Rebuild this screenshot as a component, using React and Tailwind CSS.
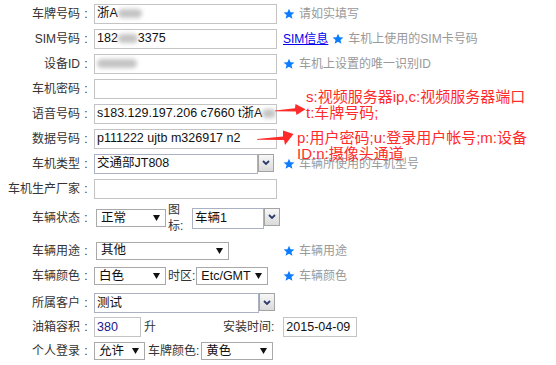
import React from 'react';

const Colon = () => <span className="inline-block w-[12px] text-center">:</span>;

const Label = ({ text, colon = true }) => (
  <div className="w-[92px] shrink-0 text-right text-[12px] text-[#333] whitespace-nowrap">
    {text}
    {colon && <Colon />}
  </div>
);

const Blur = ({ w }) => (
  <span className={`inline-block ${w} h-[9px] bg-[#c4c4c4] blur-[2px] rounded-full`} />
);

const TextBox = ({ w, children }) => (
  <div
    className={`${w} h-[20px] shrink-0 border border-[#c4c4c4] bg-white flex items-center pl-[2px] text-[12.5px] text-[#111] whitespace-nowrap overflow-hidden`}
  >
    {children}
  </div>
);

const Tri = () => (
  <svg width="7" height="6" viewBox="0 0 7 6">
    <path d="M0 0H7L3.5 6Z" fill="#111" />
  </svg>
);

const Select = ({ w, children }) => (
  <div
    className={`${w} h-[18px] shrink-0 border border-[#a9a9a9] bg-white flex items-center justify-between pl-[4px] pr-[5px] text-[12.5px] text-[#111]`}
  >
    <span>{children}</span>
    <Tri />
  </div>
);

const Combo = ({ w, h = 'h-[20px]', children }) => (
  <div className="flex items-start shrink-0">
    <div
      className={`${w} ${h} border border-[#a9b1c3] bg-white flex items-center pl-[2px] text-[12.5px] text-[#111] whitespace-nowrap`}
    >
      {children}
    </div>
    <div className="w-[16px] h-[18px] border border-[#a4a4a4] bg-linear-to-b from-[#f7f7f7] to-[#dadada] flex items-center justify-center">
      <svg width="8" height="5" viewBox="0 0 8 5">
        <path d="M1 1L4 4L7 1" stroke="#2c3b6b" strokeWidth="1.8" fill="none" />
      </svg>
    </div>
  </div>
);

const Star = () => (
  <svg width="12" height="12" viewBox="0 0 24 24" className="shrink-0">
    <path
      d="M12 1.5l3.1 7.1 7.7.6-5.9 5 1.9 7.5L12 17.6l-6.8 4.1 1.9-7.5-5.9-5 7.7-.6z"
      fill="#0a7cff"
    />
  </svg>
);

const Hint = ({ children }) => (
  <div className="ml-[2px] flex items-center gap-[4px] text-[12px] text-[#999] whitespace-nowrap">
    <Star />
    <span>{children}</span>
  </div>
);

const Cell = ({ children }) => (
  <div className="w-[189px] shrink-0 pl-[2px] flex items-center">{children}</div>
);

export default function App() {
  return (
    <div className="relative w-[556px] h-[365px] overflow-hidden bg-white pt-[1px] font-['Liberation_Sans','Noto_Sans_CJK_SC',sans-serif]">
      {/* 基本信息 */}
      <div className="flex items-center h-[25px]">
        <Label text="车牌号码" />
        <Cell>
          <TextBox w="w-[183px]">
            浙A
            <Blur w="w-[24px]" />
          </TextBox>
        </Cell>
        <Hint>请如实填写</Hint>
      </div>

      <div className="flex items-center h-[25px]">
        <Label text="SIM号码" />
        <Cell>
          <TextBox w="w-[183px]">
            182
            <Blur w="w-[20px]" />
            3375
          </TextBox>
        </Cell>
        <a className="ml-[2px] text-[12px] text-[#0000ee] underline whitespace-nowrap">SIM信息</a>
        <div className="ml-[2px]">
          <Hint>车机上使用的SIM卡号码</Hint>
        </div>
      </div>

      <div className="flex items-center h-[25px]">
        <Label text="设备ID" />
        <Cell>
          <TextBox w="w-[183px]">
            <Blur w="w-[40px]" />
          </TextBox>
        </Cell>
        <Hint>车机上设置的唯一识别ID</Hint>
      </div>

      <div className="flex items-center h-[25px]">
        <Label text="车机密码" />
        <Cell>
          <TextBox w="w-[183px]" />
        </Cell>
      </div>

      <div className="flex items-center h-[25px]">
        <Label text="语音号码" />
        <Cell>
          <TextBox w="w-[183px]">
            s183.129.197.206 c7660 t浙A
            <Blur w="w-[20px]" />
          </TextBox>
        </Cell>
      </div>

      <div className="flex items-center h-[25px]">
        <Label text="数据号码" />
        <Cell>
          <TextBox w="w-[183px]">p111222 ujtb m326917 n2</TextBox>
        </Cell>
      </div>

      <div className="flex items-center h-[25px]">
        <Label text="车机类型" />
        <Cell>
          <Combo w="w-[164px]">交通部JT808</Combo>
        </Cell>
        <Hint>车辆所使用的车机型号</Hint>
      </div>

      <div className="flex items-center h-[25px]">
        <Label text="车机生产厂家" />
        <Cell>
          <TextBox w="w-[183px]" />
        </Cell>
      </div>

      {/* 车辆信息 */}
      <div className="flex items-center h-[34px]">
        <Label text="车辆状态" />
        <Cell>
          <div className="ml-[2px]">
            <Select w="w-[70px]">正常</Select>
          </div>
          <div className="ml-[2px] w-[15px] text-[12px] leading-[16px] text-[#333]">图标:</div>
          <div className="ml-[9px]">
            <Combo w="w-[72px]" h="h-[21px]">车辆1</Combo>
          </div>
        </Cell>
      </div>

      <div className="flex items-center h-[31px]">
        <Label text="车辆用途" />
        <Cell>
          <div className="ml-[2px]">
            <Select w="w-[133px]">其他</Select>
          </div>
        </Cell>
        <Hint>车辆用途</Hint>
      </div>

      <div className="flex items-center h-[20px]">
        <Label text="车辆颜色" />
        <Cell>
          <Select w="w-[72px]">白色</Select>
          <span className="ml-[2px] text-[12px] text-[#333] whitespace-nowrap">时区:</span>
          <div className="ml-[1px]">
            <Select w="w-[72px]">Etc/GMT</Select>
          </div>
        </Cell>
        <Hint>车辆颜色</Hint>
      </div>

      <div className="flex items-center h-[34px]">
        <Label text="所属客户" />
        <Cell>
          <Combo w="w-[165px]">测试</Combo>
        </Cell>
      </div>

      <div className="flex items-center h-[14px]">
        <Label text="油箱容积" />
        <div className="pl-[2px] flex items-center">
          <TextBox w="w-[47px]">
            <span className="text-[#1a1a8a]">380</span>
          </TextBox>
          <span className="ml-[3px] text-[12px] text-[#333]">升</span>
          <span className="ml-[67px] text-[12px] text-[#333] whitespace-nowrap">安装时间:</span>
          <div className="ml-[9px]">
            <TextBox w="w-[74px]">2015-04-09</TextBox>
          </div>
        </div>
      </div>

      <div className="flex items-center h-[34px]">
        <Label text="个人登录" />
        <Cell>
          <Select w="w-[51px]">允许</Select>
          <span className="ml-[3px] text-[12px] text-[#333] whitespace-nowrap">车牌颜色:</span>
          <div className="ml-[2px]">
            <Select w="w-[72px]">黄色</Select>
          </div>
        </Cell>
      </div>

      {/* 标注 */}
      <svg className="absolute left-0 top-0 pointer-events-none" width="556" height="365">
        <path d="M275 110.5L295 108.2L295.5 104L305.5 109.2L296.5 115L295.8 111.6L275 111.3Z" fill="#ff2b2b" />
        <path d="M257 139L283 136.5L283 130.5L293.5 134L285 145L284 140L257 139.8Z" fill="#ff2b2b" />
      </svg>
      <div className="absolute left-[306px] top-[89px] text-[15px] leading-[16px] text-[#ff2b2b] whitespace-nowrap">
        s:视频服务器ip,c:视频服务器端口
        <br />
        t:车牌号码;
      </div>
      <div className="absolute left-[297px] top-[130px] text-[15px] leading-[16px] text-[#ff2b2b] whitespace-nowrap">
        p:用户密码;u:登录用户帐号;m:设备
        <br />
        ID:n:摄像头通道
      </div>
    </div>
  );
}
